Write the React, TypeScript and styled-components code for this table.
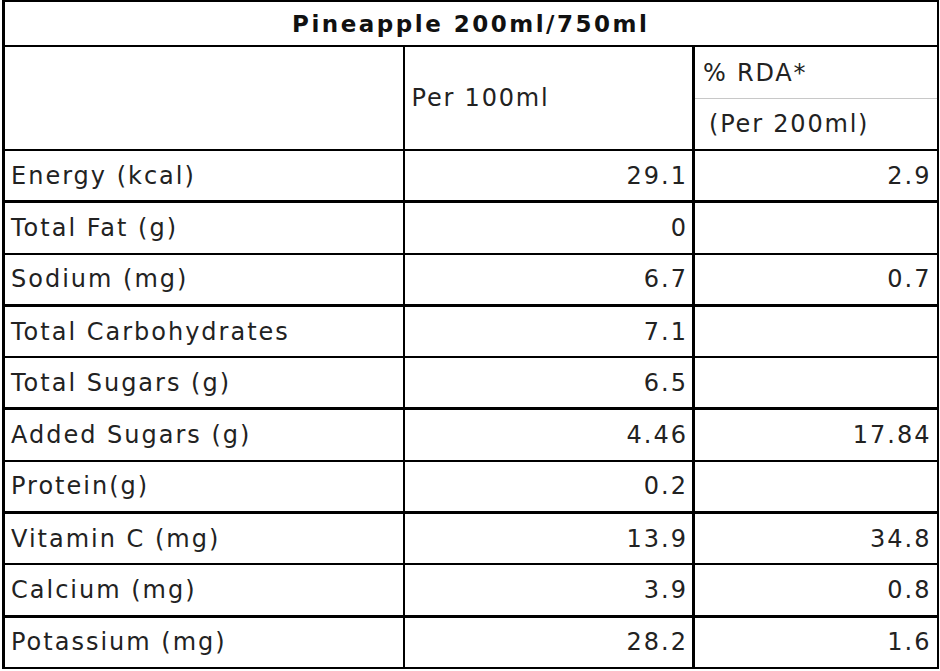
import React from "react";
import styled, { createGlobalStyle } from "styled-components";

const GlobalStyle = createGlobalStyle`
  html, body {
    margin: 0;
    padding: 0;
    background: #ffffff;
  }
`;

interface NutrientRow {
  label: string;
  per100: string;
  rda: string;
  thick: boolean;
}

const rows: NutrientRow[] = [
  { label: "Energy (kcal)", per100: "29.1", rda: "2.9", thick: false },
  { label: "Total Fat (g)", per100: "0", rda: "", thick: true },
  { label: "Sodium (mg)", per100: "6.7", rda: "0.7", thick: false },
  { label: "Total Carbohydrates", per100: "7.1", rda: "", thick: true },
  { label: "Total Sugars (g)", per100: "6.5", rda: "", thick: false },
  { label: "Added Sugars (g)", per100: "4.46", rda: "17.84", thick: true },
  { label: "Protein(g)", per100: "0.2", rda: "", thick: false },
  { label: "Vitamin C (mg)", per100: "13.9", rda: "34.8", thick: true },
  { label: "Calcium (mg)", per100: "3.9", rda: "0.8", thick: false },
  { label: "Potassium (mg)", per100: "28.2", rda: "1.6", thick: true },
];

const Page = styled.div`
  padding: 0 0 0 2px;
  font-family: "DejaVu Sans", "Liberation Sans", sans-serif;
  color: #222222;
`;

const Table = styled.table`
  width: 934px;
  table-layout: fixed;
  border-collapse: collapse;
  border-left: 3px solid #000;
  border-right: 2px solid #000;
  border-bottom: 2px solid #000;
`;

const TitleCell = styled.th`
  height: 43px;
  padding: 0;
  border-top: 2px solid #000;
  border-bottom: 2px solid #000;
  font-size: 23px;
  font-weight: 700;
  letter-spacing: 2.5px;
  color: #111111;
  text-align: center;
  vertical-align: middle;
`;

const HeadCell = styled.td<{ $sep: number }>`
  padding: 0 0 0 7px;
  border-right: ${(p) => p.$sep}px solid #000;
  font-size: 24px;
  letter-spacing: 1.8px;
  vertical-align: middle;
`;

const RdaCell = styled.td<{ $top?: boolean }>`
  height: ${(p) => (p.$top ? 51 : 50)}px;
  padding: 0 0 0 ${(p) => (p.$top ? 8 : 14)}px;
  border-bottom: ${(p) => (p.$top ? "1px solid #c8c8c8" : "none")};
  font-size: 24px;
  letter-spacing: 1.8px;
  vertical-align: middle;
`;

const BodyRow = styled.tr<{ $thick: boolean }>`
  border-top: ${(p) => (p.$thick ? 3 : 2)}px solid #000;
  height: 51.8px;
`;

const LabelCell = styled.td`
  padding: 0 0 0 6px;
  border-right: 2px solid #000;
  font-size: 24px;
  letter-spacing: 2px;
  white-space: nowrap;
  vertical-align: middle;
`;

const NumCell = styled.td<{ $sep?: number }>`
  padding: 0 ${(p) => (p.$sep ? 4 : 5)}px 0 0;
  border-right: ${(p) => (p.$sep ? `${p.$sep}px solid #000` : "none")};
  font-size: 24px;
  letter-spacing: 2px;
  text-align: right;
  vertical-align: middle;
`;

export default function App() {
  return (
    <Page>
      <GlobalStyle />
      <Table>
        <colgroup>
          <col style={{ width: "400px" }} />
          <col style={{ width: "290px" }} />
          <col style={{ width: "244px" }} />
        </colgroup>
        <thead>
          <tr>
            <TitleCell colSpan={3}>Pineapple 200ml/750ml</TitleCell>
          </tr>
        </thead>
        <tbody>
          <tr>
            <HeadCell rowSpan={2} $sep={2} />
            <HeadCell rowSpan={2} $sep={3}>
              Per 100ml
            </HeadCell>
            <RdaCell $top>% RDA*</RdaCell>
          </tr>
          <tr>
            <RdaCell>(Per 200ml)</RdaCell>
          </tr>
          {rows.map((r) => (
            <BodyRow key={r.label} $thick={r.thick}>
              <LabelCell>{r.label}</LabelCell>
              <NumCell $sep={3}>{r.per100}</NumCell>
              <NumCell>{r.rda}</NumCell>
            </BodyRow>
          ))}
        </tbody>
      </Table>
    </Page>
  );
}
